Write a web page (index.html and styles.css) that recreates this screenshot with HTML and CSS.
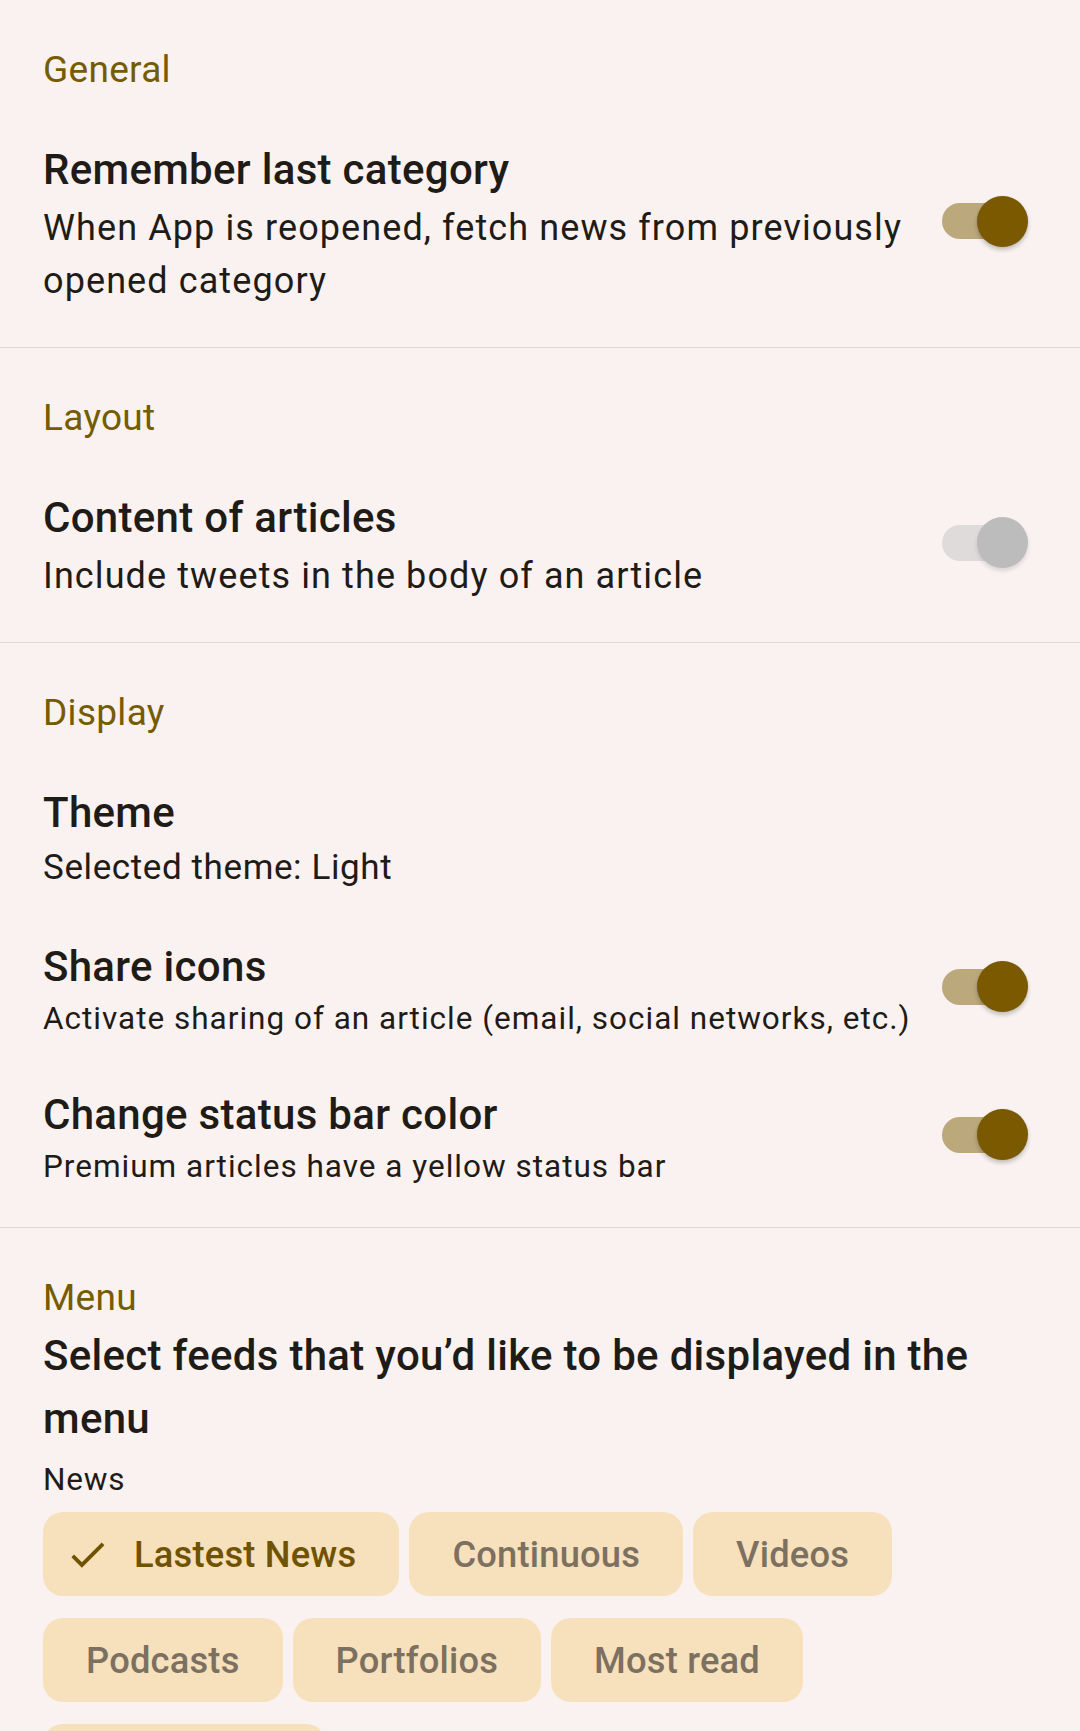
FILE: index.html
```html
<!DOCTYPE html>
<html>
<head>
<meta charset="utf-8">
<link rel="stylesheet" href="styles.css">
</head>
<body>
<div class="page">
  <section class="section">
    <h2 class="section-title">General</h2>
    <div class="item">
      <div class="item-text">
        <div class="item-title">Remember last category</div>
        <div class="item-sub">When App is reopened, fetch news from previously opened category</div>
      </div>
      <div class="switch on"><span class="track"></span><span class="thumb"></span></div>
    </div>
  </section>
  <section class="section">
    <h2 class="section-title">Layout</h2>
    <div class="item">
      <div class="item-text">
        <div class="item-title">Content of articles</div>
        <div class="item-sub">Include tweets in the body of an article</div>
      </div>
      <div class="switch disabled"><span class="track"></span><span class="thumb"></span></div>
    </div>
  </section>
  <section class="section display">
    <h2 class="section-title">Display</h2>
    <div class="items">
      <div class="item">
        <div class="item-text">
          <div class="item-title">Theme</div>
          <div class="item-sub theme">Selected theme: Light</div>
        </div>
      </div>
      <div class="item">
        <div class="item-text">
          <div class="item-title">Share icons</div>
          <div class="item-sub small">Activate sharing of an article (email, social networks, etc.)</div>
        </div>
        <div class="switch on"><span class="track"></span><span class="thumb"></span></div>
      </div>
      <div class="item">
        <div class="item-text">
          <div class="item-title">Change status bar color</div>
          <div class="item-sub small">Premium articles have a yellow status bar</div>
        </div>
        <div class="switch on"><span class="track"></span><span class="thumb"></span></div>
      </div>
    </div>
  </section>
  <section class="section menu">
    <h2 class="section-title">Menu</h2>
    <div class="menu-title">Select feeds that you’d like to be displayed in the menu</div>
    <div class="group-label">News</div>
    <div class="chips">
      <div class="chip selected">
        <svg class="check" viewBox="0 0 24 24" width="45" height="45"><path d="M9 16.17L4.83 12l-1.42 1.41L9 19 21 7l-1.41-1.41z" fill="currentColor"/></svg>
        <span>Lastest News</span>
      </div>
      <div class="chip"><span>Continuous</span></div>
      <div class="chip"><span>Videos</span></div>
      <div class="chip"><span>Podcasts</span></div>
      <div class="chip"><span>Portfolios</span></div>
      <div class="chip"><span>Most read</span></div>
      <div class="chip"><span>Newsletters</span></div>
    </div>
  </section>
</div>
</body>
</html>
```

FILE: styles.css
```css
html, body {
  margin: 0;
  padding: 0;
  background: #f9f2f1;
}
body {
  font-family: Roboto, "Noto Sans", "Liberation Sans", sans-serif;
  color: #1f1b16;
}
.page {
  width: 1080px;
  overflow: hidden;
}
.section {
  padding: 46px 52px 39px 43px;
  border-bottom: 1.5px solid #e4d6d4;
}
.section.display {
  padding-bottom: 37px;
}
.section-title {
  margin: 0 0 48px 0;
  font-size: 37px;
  line-height: 48px;
  font-weight: 400;
  color: #765b00;
  letter-spacing: 0.3px;
}
.items {
  display: flex;
  flex-direction: column;
  gap: 45px;
}
.item {
  display: flex;
  align-items: center;
  gap: 16px;
}
.item-text {
  flex: 1;
  min-width: 0;
}
.item-title {
  font-size: 42px;
  line-height: 56px;
  font-weight: 500;
  letter-spacing: 0.3px;
}
.item-sub {
  margin-top: 4px;
  font-size: 36px;
  line-height: 53px;
  letter-spacing: 1.1px;
}
.item-sub.theme {
  margin-top: 0;
  font-size: 35px;
  letter-spacing: 0.6px;
}
.item-sub.small {
  margin-top: 0;
  font-size: 31.5px;
  line-height: 47px;
  letter-spacing: 1px;
}
.switch {
  position: relative;
  width: 86px;
  height: 51px;
  flex: none;
  margin-bottom: 8px;
}
.switch .track {
  position: absolute;
  left: 0;
  top: 7.5px;
  width: 78px;
  height: 36px;
  border-radius: 18px;
  background: #bba87b;
}
.switch .thumb {
  position: absolute;
  right: 0;
  top: 0;
  width: 51px;
  height: 51px;
  border-radius: 50%;
  background: #7a5900;
  box-shadow: 0 3px 4px rgba(0,0,0,0.22), 0 0 1px rgba(0,0,0,0.15);
}
.switch.disabled .track {
  background: #dfdbda;
}
.switch.disabled .thumb {
  background: #bdbcbc;
  box-shadow: 0 3px 4px rgba(0,0,0,0.12);
}
.menu {
  border-bottom: none;
  padding-top: 46px;
}
.menu .section-title {
  margin-bottom: 2px;
}
.menu-title {
  font-size: 42px;
  line-height: 63px;
  font-weight: 500;
  letter-spacing: 0.3px;
}
.group-label {
  margin-top: 8px;
  font-size: 31.5px;
  line-height: 44px;
  letter-spacing: 0.8px;
}
.chips {
  margin-top: 10px;
  display: flex;
  flex-wrap: wrap;
  column-gap: 10px;
  row-gap: 22px;
}
.chip {
  height: 84px;
  box-sizing: border-box;
  padding: 0 43px;
  border-radius: 20px;
  background: #f7e0bc;
  display: flex;
  align-items: center;
  font-size: 36.3px;
  font-weight: 500;
  color: #7c7061;
  letter-spacing: 0.2px;
}
.chip.selected {
  padding-left: 22px;
  color: #6f5300;
  gap: 24px;
}
.check {
  display: block;
  flex: none;
}
```
